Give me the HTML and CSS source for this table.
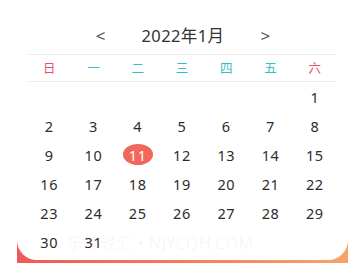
FILE: index.html
```html
<!DOCTYPE html>
<html lang="zh">
<head>
<meta charset="utf-8">
<link rel="stylesheet" href="styles.css">
</head>
<body>
<div class="frame">
  <div class="card">
    <div class="header">
      <span class="arrow">&lt;</span>
      <span class="title">2022年1月</span>
      <span class="arrow">&gt;</span>
    </div>
    <div class="weekdays">
      <span class="wk red">日</span>
      <span class="wk teal">一</span>
      <span class="wk teal">二</span>
      <span class="wk teal">三</span>
      <span class="wk teal">四</span>
      <span class="wk teal">五</span>
      <span class="wk red">六</span>
    </div>
    <div class="days">
      <span></span><span></span><span></span><span></span><span></span><span></span><span class="d">1</span>
      <span class="d">2</span><span class="d">3</span><span class="d">4</span><span class="d">5</span><span class="d">6</span><span class="d">7</span><span class="d">8</span>
      <span class="d">9</span><span class="d">10</span><span class="d"><b class="today">11</b></span><span class="d">12</span><span class="d">13</span><span class="d">14</span><span class="d">15</span>
      <span class="d">16</span><span class="d">17</span><span class="d">18</span><span class="d">19</span><span class="d">20</span><span class="d">21</span><span class="d">22</span>
      <span class="d">23</span><span class="d">24</span><span class="d">25</span><span class="d">26</span><span class="d">27</span><span class="d">28</span><span class="d">29</span>
      <span class="d">30</span><span class="d">31</span>
    </div>
  </div>
  <div class="watermark">乐享轻汇 • NJYCQH.COM</div>
</div>
</body>
</html>
```
FILE: styles.css
```css
* { box-sizing: border-box; }
html, body { margin: 0; padding: 0; background: #fff; }
body {
  width: 356px;
  height: 264px;
  overflow: hidden;
  font-family: "Noto Sans", "Noto Sans CJK SC", sans-serif;
  color: #333;
}
.frame {
  position: relative;
  margin: 0 8px 0 17px;
  padding-bottom: 3px;
  background: linear-gradient(90deg, #f0585c 0%, #f47c5e 50%, #f8a466 100%);
}
.card {
  position: relative;
  z-index: 1;
  background: #fff;
  border-radius: 0 0 20px 20px;
  padding: 24px 11px 4px 10px;
}
.header {
  display: flex;
  justify-content: center;
  align-items: center;
  height: 24px;
  gap: 36px;
  margin-bottom: 6px;
  padding-left: 2px;
}
.arrow {
  font-size: 17px;
  color: #555;
  line-height: 24px;
}
.title {
  font-size: 16.5px;
  line-height: 24px;
  color: #333;
  letter-spacing: 0.4px;
}
.weekdays {
  display: grid;
  grid-template-columns: repeat(7, 1fr);
  border-top: 1px solid #eeeeee;
  border-bottom: 1px solid #eeeeee;
  height: 28px;
  align-items: center;
}
.wk {
  text-align: center;
  font-size: 12.5px;
  line-height: 27px;
}
.red { color: #e8506a; }
.teal { color: #35bcc6; }
.days {
  display: grid;
  grid-template-columns: repeat(7, 1fr);
  grid-auto-rows: 29px;
}
.days span {
  display: flex;
  align-items: center;
  justify-content: center;
}
.d {
  font-size: 14.5px;
  color: #2c2c2c;
  letter-spacing: 0.6px;
}
.today {
  display: flex;
  align-items: center;
  justify-content: center;
  width: 30px;
  height: 21px;
  border-radius: 50%;
  background: #f2675c;
  color: #fff;
  font-weight: normal;
}
.watermark {
  position: absolute;
  z-index: 2;
  left: 50px;
  top: 230px;
  font-size: 16px;
  color: rgba(240, 120, 200, 0.10);
  letter-spacing: 0.5px;
  white-space: nowrap;
  pointer-events: none;
}
```
